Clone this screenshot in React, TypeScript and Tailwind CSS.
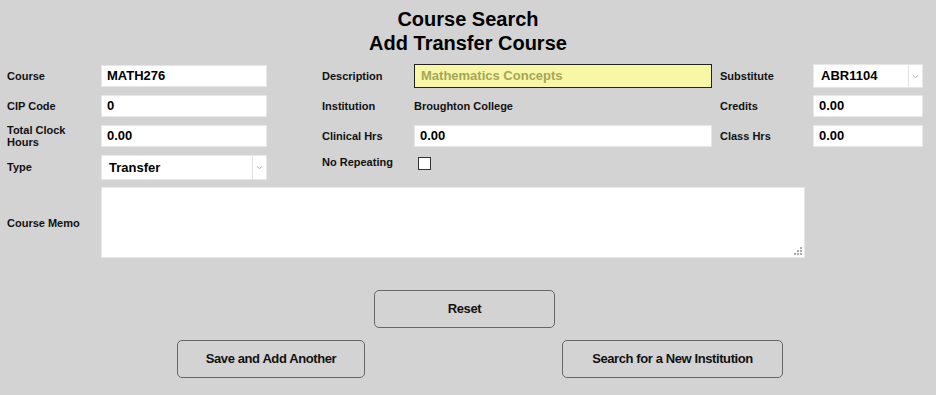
import React from 'react';

const labelCls = "text-[11px] font-semibold text-[#111] leading-[12px]";
const inputCls = "h-[22px] bg-white border border-[#e6e6e6] px-[5px] text-[13px] font-bold text-black outline-none";

const Select = ({ value, w, h }: { value: string; w: string; h: string }) => (
  <div className={`flex ${h} ${w} bg-white border border-[#e6e6e6]`}>
    <div className="flex-1 flex items-center px-[7px] text-[13px] font-bold text-black">{value}</div>
    <div className="w-[14px] border-l border-[#e0e0e0] flex items-center justify-center">
      <svg width="7" height="5" viewBox="0 0 7 5">
        <path d="M1 1.5 L3.5 3.5 L6 1.5" fill="none" stroke="#aaa" strokeWidth="1" />
      </svg>
    </div>
  </div>
);

const Button = ({ children, w }: { children: React.ReactNode; w: string }) => (
  <button
    className={`${w} h-[38px] rounded-[5px] border border-[#666] bg-[#d3d3d3] text-[13px] font-bold tracking-[-0.4px] text-[#111]`}
    style={{ fontFamily: '"Liberation Sans Narrow", "Arial Narrow", "Liberation Sans", Arial, sans-serif' }}
  >
    {children}
  </button>
);

export default function App() {
  return (
    <div
      className="w-[936px] h-[395px] bg-[#d3d3d3]"
      style={{ fontFamily: '"Liberation Sans", Arial, sans-serif' }}
    >
      <div className="pt-[7px] text-center text-[20px] font-bold leading-[24px] text-black">
        <div>Course Search</div>
        <div>Add Transfer Course</div>
      </div>

      <div className="grid grid-cols-[94px_166px_55px_92px_298px_8px_93px_110px] pl-[7px] mt-[9px] items-center">
        {/* row 1 */}
        <div className={labelCls}>Course</div>
        <div className={`${inputCls} flex items-center`}>MATH276</div>
        <div />
        <div className={labelCls}>Description</div>
        <div className="h-[24px] bg-[#f7f7a6] border border-[#222] px-[6px] flex items-center text-[13px] font-bold text-[#a6a65a]">
          Mathematics Concepts
        </div>
        <div />
        <div className={labelCls}>Substitute</div>
        <Select value="ABR1104" w="w-[110px]" h="h-[24px]" />

        {/* row 2 */}
        <div className={`${labelCls} mt-[7px]`}>CIP Code</div>
        <div className={`${inputCls} flex items-center mt-[7px]`}>0</div>
        <div />
        <div className={`${labelCls} mt-[7px]`}>Institution</div>
        <div className={`${labelCls} mt-[7px]`}>Broughton College</div>
        <div />
        <div className={`${labelCls} mt-[7px]`}>Credits</div>
        <div className={`${inputCls} flex items-center mt-[7px]`}>0.00</div>

        {/* row 3 */}
        <div className={`${labelCls} mt-[7px]`}>Total Clock<br />Hours</div>
        <div className={`${inputCls} flex items-center mt-[7px]`}>0.00</div>
        <div />
        <div className={`${labelCls} mt-[7px]`}>Clinical Hrs</div>
        <div className={`${inputCls} flex items-center mt-[7px]`}>0.00</div>
        <div />
        <div className={`${labelCls} mt-[7px]`}>Class Hrs</div>
        <div className={`${inputCls} flex items-center mt-[7px]`}>0.00</div>

        {/* row 4 */}
        <div className={`${labelCls} mt-[6px]`}>Type</div>
        <div className="mt-[7px]"><Select value="Transfer" w="w-[166px]" h="h-[25px]" /></div>
        <div />
        <div className={`${labelCls} mt-[8px] self-start`}>No Repeating</div>
        <div className="self-start mt-[9px] pl-[4px]">
          <div className="w-[13px] h-[13px] bg-white border border-[#333]" />
        </div>
        <div />
        <div />
        <div />
      </div>

      <div className="flex items-center pl-[7px] mt-[7px]">
        <div className={`${labelCls} w-[94px]`}>Course Memo</div>
        <div className="relative w-[704px] h-[71px] bg-white border border-[#e6e6e6]">
          <div className="absolute right-[2px] bottom-[2px] grid grid-cols-3 gap-[1px]">
            <span className="w-[2px] h-[2px]" />
            <span className="w-[2px] h-[2px]" />
            <span className="w-[2px] h-[2px] bg-[#aaa]" />
            <span className="w-[2px] h-[2px]" />
            <span className="w-[2px] h-[2px] bg-[#aaa]" />
            <span className="w-[2px] h-[2px] bg-[#aaa]" />
            <span className="w-[2px] h-[2px] bg-[#aaa]" />
            <span className="w-[2px] h-[2px] bg-[#aaa]" />
            <span className="w-[2px] h-[2px] bg-[#aaa]" />
          </div>
        </div>
      </div>

      <div className="flex mt-[32px]">
        <div className="ml-[374px]"><Button w="w-[181px]">Reset</Button></div>
      </div>
      <div className="flex mt-[12px]">
        <div className="ml-[177px]"><Button w="w-[188px]">Save and Add Another</Button></div>
        <div className="ml-[197px]"><Button w="w-[221px]">Search for a New Institution</Button></div>
      </div>
    </div>
  );
}
